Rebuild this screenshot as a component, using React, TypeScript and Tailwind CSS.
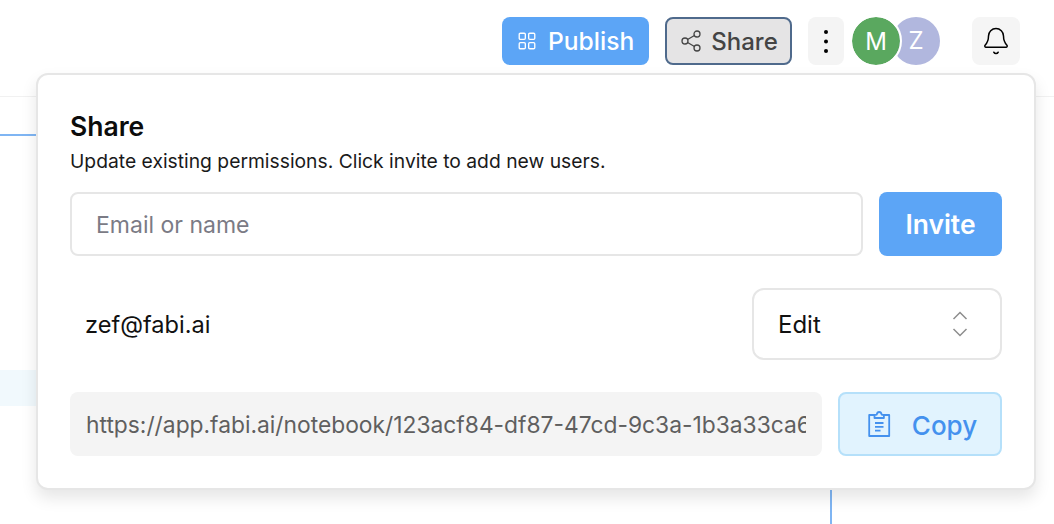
import { Share2, Bell } from "lucide-react";

function PublishIcon() {
  return (
    <svg width="20" height="20" viewBox="0 0 18 18" fill="none" stroke="currentColor" strokeWidth="1.2">
      <rect x="2" y="2" width="5.5" height="5.5" rx="1" />
      <rect x="10.5" y="2" width="5.5" height="5.5" rx="1" />
      <rect x="2" y="10.5" width="5.5" height="5.5" rx="1" />
      <rect x="10.5" y="10.5" width="5.5" height="5.5" rx="1" />
    </svg>
  );
}

function DotsIcon() {
  return (
    <svg width="6" height="26" viewBox="0 0 6 26" fill="currentColor">
      <circle cx="3" cy="4" r="2" />
      <circle cx="3" cy="13.5" r="2" />
      <circle cx="3" cy="23" r="2" />
    </svg>
  );
}

function SortIcon() {
  return (
    <svg width="16" height="28" viewBox="0 0 16 28" fill="none" stroke="#8d8d8d" strokeWidth="1.5">
      <path d="M1.5 9L8 2.5L14.5 9" />
      <path d="M1.5 19L8 25.5L14.5 19" />
    </svg>
  );
}

function ClipboardIcon() {
  return (
    <svg width="24" height="28" viewBox="0 0 24 28" fill="none" stroke="#4491ee" strokeWidth="1.8" strokeLinejoin="round">
      <path d="M8 5H2.2v21h20V5H16" />
      <path d="M7.5 8V5.2l2.2-.6C10 3 11 2 12.2 2s2.2 1 2.5 2.6l2.2.6V8z" />
      <path d="M8 13h8.5M8 16.8h8.5M8 20.6h5.5" />
    </svg>
  );
}

export default function App() {
  return (
    <div className="relative h-[524px] w-[1054px] overflow-hidden bg-white font-['Inter',sans-serif]">
      {/* Header */}
      <div className="flex h-[97px] items-start border-b border-[#f1f1f1] pt-[17px] pl-[502px]">
        <button className="flex h-12 w-[147px] items-center gap-[11px] rounded-lg bg-[#5ca5f6] pl-[15px] text-[24.6px] font-medium text-white">
          <PublishIcon />
          <span className="pt-[1px]">Publish</span>
        </button>
        <button className="ml-4 flex h-12 w-[127px] items-center justify-center gap-[8px] rounded-lg border-2 border-[#4f6a8c] bg-[#e5e4e5] text-[24px] font-medium text-[#444444]">
          <Share2 size={24} strokeWidth={1.3} />
          <span className="pt-[2px]">Share</span>
        </button>
        <button className="ml-4 flex h-12 w-9 items-center justify-center rounded-lg bg-[#f4f4f4] text-black">
          <DotsIcon />
        </button>
        <div className="ml-2 flex">
          <div className="relative z-10 flex size-[48px] items-center justify-center rounded-full bg-[#5aa85f] pt-[2px] text-[24px] text-white outline-2 outline-white">
            M
          </div>
          <div className="-ml-[8px] flex size-[48px] items-center justify-center rounded-full bg-[#b1b7de] text-[24px] text-white">
            Z
          </div>
        </div>
        <button className="ml-8 flex size-12 items-center justify-center rounded-lg bg-[#f5f5f5] text-black">
          <Bell size={30} strokeWidth={1.2} />
        </button>
      </div>

      {/* Canvas behind the popover */}
      <div className="mt-[37px] h-[2px] w-[40px] bg-[#7fb5f3]" />
      <div className="mt-[234px] h-9 w-[40px] bg-[#f1f9fd]" />
      <div className="ml-[830px] mt-[80px] h-[40px] w-[2px] bg-[#7fb5f3]" />

      {/* Popover */}
      <div className="absolute left-[36px] top-[73px] h-[417px] w-[1000px] rounded-xl border-2 border-[#e6e6e6] bg-white px-[32px] pt-[35px] shadow-[0_8px_16px_rgba(0,0,0,0.10)]">
        <h2 className="text-[26.5px] leading-[32px] font-semibold text-[#0c0c0c]">Share</h2>
        <p className="mt-[6px] text-[19.3px] leading-[26px] text-[#1a1a1a]">
          Update existing permissions. Click invite to add new users.
        </p>
        <div className="mt-[18px] flex gap-4">
          <div className="flex h-16 w-[793px] items-center rounded-lg border-2 border-[#e6e6e6] pl-6 pt-[3px] text-[23px] text-[#7b7b85]">
            Email or name
          </div>
          <button className="h-16 w-[123px] rounded-lg bg-[#5ca5f6] pt-[2px] text-[26.4px] font-semibold text-white">
            Invite
          </button>
        </div>
        <div className="mt-8 flex h-[72px] items-center justify-between">
          <span className="pl-[15px] pt-[2px] text-[23.6px] text-[#111111]">zef@fabi.ai</span>
          <div className="flex h-[72px] w-[250px] items-center justify-between rounded-xl border-2 border-[#e6e6e6] pl-6 pr-[32px] text-[24px] text-[#111111]">
            <span className="pt-[2px]">Edit</span>
            <SortIcon />
          </div>
        </div>
        <div className="mt-8 flex gap-4">
          <div className="flex h-16 w-[752px] items-center rounded-lg bg-[#f4f4f4] px-4 pt-[3px] text-[22.8px] text-[#5f5f5f]">
            <span className="overflow-hidden whitespace-nowrap">
              https://app.fabi.ai/notebook/123acf84-df87-47cd-9c3a-1b3a33ca6f10
            </span>
          </div>
          <button className="flex h-16 w-[164px] items-center justify-center gap-[21px] rounded-lg border-2 border-[#b5e0fa] bg-[#e1f3fe] pl-1 text-[26px] font-medium text-[#4491ee]">
            <ClipboardIcon />
            <span className="pt-[2px]">Copy</span>
          </button>
        </div>
      </div>
    </div>
  );
}
